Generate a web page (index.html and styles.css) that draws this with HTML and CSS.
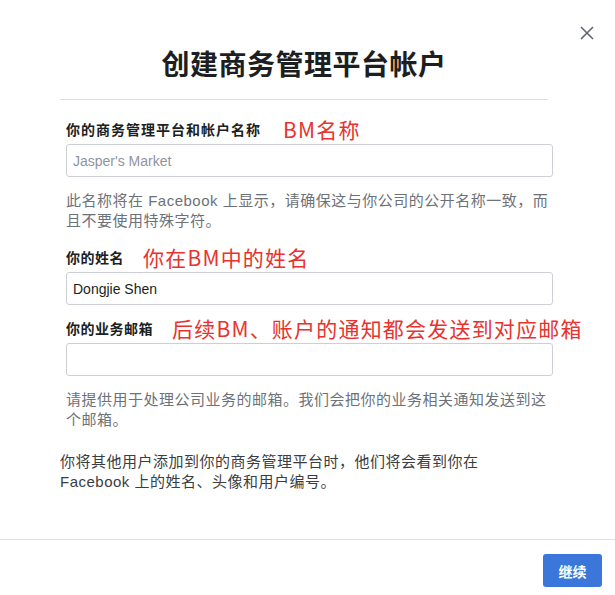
FILE: index.html
```html
<!DOCTYPE html>
<html lang="zh-CN">
<head>
    <meta charset="UTF-8">
    <title>创建商务管理平台帐户</title>
    <link rel="stylesheet" href="styles.css">
</head>
<body>
<div class="dialog">
    <span class="close">
        <svg width="14" height="14" viewBox="0 0 14 14"><path d="M1 1L13 13M13 1L1 13" stroke="#606770" stroke-width="1.6" fill="none"/></svg>
    </span>

    <div class="header">
        <h1>创建商务管理平台帐户</h1>
    </div>

    <div class="form">
        <div class="row">
            <label>你的商务管理平台和帐户名称</label>
            <span class="note-red">BM名称</span>
        </div>
        <input class="text-input" type="text" placeholder="Jasper's Market">
        <p class="help">此名称将在 Facebook 上显示，请确保这与你公司的公开名称一致，而且不要使用特殊字符。</p>

        <div class="row row-2">
            <label>你的姓名</label>
            <span class="note-red">你在BM中的姓名</span>
        </div>
        <input class="text-input" type="text" value="Dongjie Shen">

        <div class="row row-3">
            <label>你的业务邮箱</label>
            <span class="note-red">后续BM、账户的通知都会发送到对应邮箱</span>
        </div>
        <input class="text-input" type="text">
        <p class="help">请提供用于处理公司业务的邮箱。我们会把你的业务相关通知发送到这个邮箱。</p>

        <p class="info">你将其他用户添加到你的商务管理平台时，他们将会看到你在 Facebook 上的姓名、头像和用户编号。</p>
    </div>

    <div class="footer">
        <button class="btn">继续</button>
    </div>
</div>
</body>
</html>
```

FILE: styles.css
```css
*{
    padding: 0;
    margin: 0;
    box-sizing: border-box;
}
body{
    background-color: #fff;
    font-family: "Liberation Sans", "Noto Sans CJK SC", sans-serif;
    color: #1c1e21;
}
.dialog{
    width: 615px;
    height: 595px;
    position: relative;
}
.close{
    position: absolute;
    top: 26px;
    right: 21px;
    width: 14px;
    height: 14px;
    display: block;
}
.close svg{
    display: block;
}
.header{
    margin: 0 67px 0 60px;
    padding: 45px 0 18px;
    border-bottom: 1px solid #dadde1;
    text-align: center;
}
.header h1{
    font: 700 28px/36px "Noto Sans CJK SC", sans-serif;
    letter-spacing: 0.5px;
    color: #1c1e21;
}
.form{
    padding: 15px 62px 0 66px;
}
.row{
    display: flex;
    align-items: center;
    height: 28px;
    white-space: nowrap;
}
.row label{
    flex-shrink: 0;
    font: 700 14px/28px "Noto Sans CJK SC", sans-serif;
    letter-spacing: 0.5px;
    color: #1c1e21;
}
.row:first-child label{
    letter-spacing: 1px;
}
.note-red{
    flex-shrink: 0;
    font: 400 21px/28px "Noto Sans CJK SC", sans-serif;
    letter-spacing: 1.2px;
    color: #e8322e;
    margin-left: 19px;
}
.row:first-child .note-red{
    margin-left: 22px;
}
.row-2{
    margin-top: 12px;
}
.row-3{
    margin-top: 9px;
}
.text-input{
    display: block;
    width: 100%;
    height: 33px;
    margin-top: 1px;
    padding: 0 6px;
    border: 1px solid #ccd0d5;
    border-radius: 3px;
    font: 400 14px "Liberation Sans", "Noto Sans CJK SC", sans-serif;
    color: #1c1e21;
    outline: none;
}
.text-input::placeholder{
    color: #90949c;
}
.help{
    margin-top: 14px;
    font: 400 15px/20px "Liberation Sans", "Noto Sans CJK SC", sans-serif;
    letter-spacing: 0.5px;
    color: #6d7278;
}
.info{
    margin: 22px 0 0 -6px;
    font: 400 15px/20px "Liberation Sans", "Noto Sans CJK SC", sans-serif;
    letter-spacing: 0.5px;
    color: #3a3d42;
    padding-right: 60px;
}
.footer{
    position: absolute;
    left: 0;
    right: 0;
    top: 539px;
    border-top: 1px solid #dddfe2;
    padding: 14px 13px 0 0;
    display: flex;
    justify-content: flex-end;
}
.btn{
    width: 59px;
    height: 33px;
    border: none;
    border-radius: 3px;
    background-color: #3b77db;
    color: #fff;
    font: 700 14px "Noto Sans CJK SC", sans-serif;
    cursor: pointer;
}
```
